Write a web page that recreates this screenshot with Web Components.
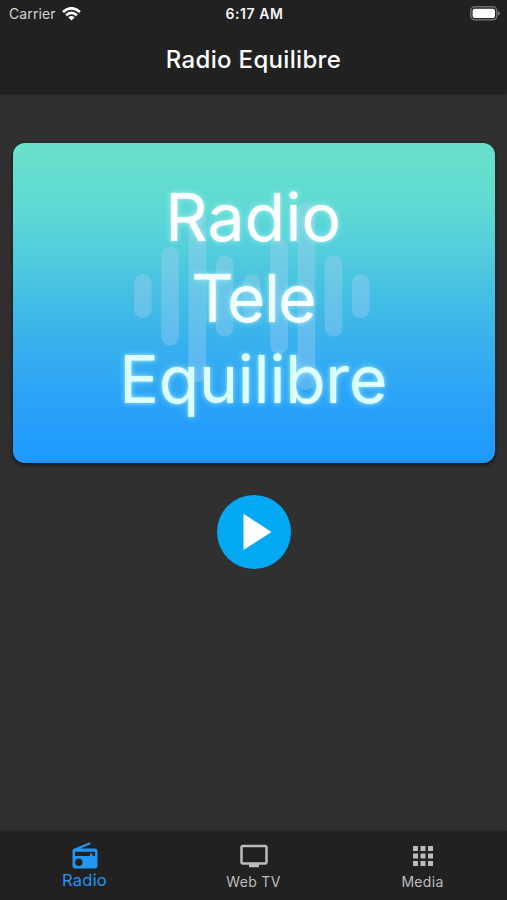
<!DOCTYPE html>
<html lang="en">
<head>
<meta charset="utf-8">
<meta name="viewport" content="width=device-width, initial-scale=1">
<title>Radio Equilibre</title>
<style>
	body {
		margin: 0;
		background: #303030;
		font-family: Inter, "Liberation Sans", sans-serif;
	}
</style>
</head>
<body>
<radio-app>
	<status-bar slot="top" carrier="Carrier" time="6:17 AM"></status-bar>
	<app-bar slot="top">Radio Equilibre</app-bar>
	<cover-card>
		<cover-line style="--spacing: 0.2px">Radio</cover-line>
		<cover-line style="--spacing: -1.6px">Tele</cover-line>
		<cover-line style="--spacing: -0.2px">Equilibre</cover-line>
	</cover-card>
	<play-button></play-button>
	<tab-bar slot="bottom">
		<tab-item icon="radio" active>Radio</tab-item>
		<tab-item icon="tv">Web TV</tab-item>
		<tab-item icon="apps">Media</tab-item>
	</tab-bar>
</radio-app>

<script>
class BaseElement extends HTMLElement {
	constructor() {
		super();
		this.attachShadow({ mode: "open" });
	}
	connectedCallback() {
		this.shadowRoot.innerHTML = this.render();
	}
}

class RadioApp extends BaseElement {
	render() {
		return `
<style>
	:host {
		display: flex;
		flex-direction: column;
		height: 900px;
		overflow: hidden;
		background: #303030;
	}
	header {
		background: #212121;
		height: 94px;
		box-shadow: 0 1px 3px #0003;
	}
	main {
		flex: 1;
		display: flex;
		flex-direction: column;
		align-items: center;
		gap: 32px;
		padding: 49px 12.5px 0 13px;
	}
</style>
<header><slot name="top"></slot></header>
<main><slot></slot></main>
<slot name="bottom"></slot>`;
	}
}

class StatusBar extends BaseElement {
	render() {
		return `
<style>
	:host {
		display: grid;
		grid-template-columns: 1fr auto 1fr;
		align-items: center;
		height: 27px;
		padding: 0 7px 0 9px;
		color: #f4f4f4;
		font-size: 14px;
	}
	.carrier {
		display: flex;
		align-items: center;
		gap: 6px;
		color: #d4d4d4;
		letter-spacing: 0.1px;
	}
	.time { font-weight: 600; font-size: 14px; letter-spacing: 0.55px; }
	.battery { justify-self: end; }
	svg { display: block; }
</style>
<span class="carrier"><span>${this.getAttribute("carrier")}</span>
	<svg width="19" height="14" viewBox="0 0 19 14" fill="none" stroke="#fff" stroke-width="2.7">
		<path d="M1 5Q9.500-2.400 18 5M4.100 8.300Q9.500 3.500 14.900 8.300"/>
		<path d="M6.300 10.300Q9.500 7.700 12.700 10.300L9.500 13.500Z" fill="#fff" stroke="none"/>
	</svg>
</span>
<span class="time">${this.getAttribute("time")}</span>
<svg class="battery" width="30" height="15" viewBox="0 0 30 15">
	<rect x=".8" y=".8" width="26" height="13" rx="4" fill="none" stroke="#6e6e6e" stroke-width="1.500"/>
	<rect x="2.600" y="2.700" width="22.400" height="9.200" rx="2" fill="#fff"/>
	<path d="M28 5.200Q30 6 30 7.300T28 9.400Z" fill="#777"/>
</svg>`;
	}
}

class AppBar extends BaseElement {
	render() {
		return `
<style>
	:host {
		display: flex;
		align-items: center;
		justify-content: center;
		height: 65px;
		color: #fff;
		font-size: 24px;
		font-weight: 500;
		letter-spacing: 0.32px;
	}
</style>
<slot></slot>`;
	}
}

class CoverCard extends BaseElement {
	// bar heights of the equalizer, left to right
	static BARS = [44, 99, 172, 81, 44, 116, 188, 81, 44];

	render() {
		const bars = CoverCard.BARS.map((h, i) =>
			`<rect x="${i * 27.25}" y="${94 - h / 2}" width="17.7" height="${h}" rx="8.85"/>`).join("");
		return `
<style>
	:host {
		display: grid;
		place-items: center;
		align-self: stretch;
		height: 320px;
		border-radius: 12px;
		background: linear-gradient(#69e1cc, #60dad3 19%, #52cddc 34%, #43bde4 49%, #37afee 64%, #2aa3f8 80%, #1f99ff);
		box-shadow: 0 2px 4px #0009;
	}
	svg, .text { grid-area: 1 / 1; }
	svg { margin: 0 4px 14px 0; }
	.text { padding: 0 1px 10px 0; text-align: center; }
</style>
<svg width="236" height="188" viewBox="0 0 236 188" fill="#b4d4f4" fill-opacity=".32">${bars}</svg>
<div class="text"><slot></slot></div>`;
	}
}

class CoverLine extends BaseElement {
	render() {
		return `
<style>
	:host {
		display: block;
		font-size: 66px;
		line-height: 81px;
		letter-spacing: var(--spacing, 0);
	}
	span {
		color: var(--fill, #fff);
		text-shadow: 0 0 2px #c8ffff90, 0 0 6px #c8ffffa0;
	}
	:host(:nth-of-type(2)) { --fill: #f4ffff; }
	:host(:nth-of-type(3)) { --fill: #dcffff; }
</style>
<span><slot></slot></span>`;
	}
}

class PlayButton extends BaseElement {
	render() {
		return `
<style>
	:host { display: block; }
	button {
		display: block;
		width: 74px;
		height: 74px;
		padding: 0;
		border: none;
		border-radius: 50%;
		background: #03a9f4;
	}
	svg { display: block; }
</style>
<button aria-label="Play">
	<svg width="74" height="74" viewBox="0 0 74 74"><path d="M26.500 18.800V55L54.500 36.900Z" fill="#fff"/></svg>
</button>`;
	}
}

class TabBar extends BaseElement {
	render() {
		return `
<style>
	:host {
		display: grid;
		grid-template-columns: repeat(3, 1fr);
		height: 69px;
		background: #212121;
		box-shadow: 0 -1px 3px #0003;
	}
</style>
<slot></slot>`;
	}
}

class TabItem extends BaseElement {
	static ICONS = {
		radio: "M3.240 6.150C2.510 6.430 2 7.170 2 8v12c0 1.100.890 2 2 2h16c1.110 0 2-.900 2-2V8c0-1.110-.890-2-2-2H8.300l8.260-3.340L15.880 1 3.240 6.150zM7 20c-1.660 0-3-1.340-3-3s1.340-3 3-3 3 1.340 3 3-1.340 3-3 3zm13-8h-2v-2h-2v2H4V8.500h16v3.500z",
		tv: "M21 3H3c-1.100 0-2 .900-2 2v12c0 1.100.900 2 2 2h5v2h8v-2h5c1.100 0 1.990-.900 1.990-2L23 5c0-1.100-.900-2-2-2zm0 14H3V5h18v12z",
		apps: "M4 8h4V4H4v4zm6 12h4v-4h-4v4zm-6 0h4v-4H4v4zm0-6h4v-4H4v4zm6 0h4v-4h-4v4zm6-10v4h4V4h-4zm-6 4h4V4h-4v4zm6 6h4v-4h-4v4zm0 6h4v-4h-4v4z",
	};

	render() {
		return `
<style>
	:host {
		display: flex;
		flex-direction: column;
		align-items: center;
		padding-top: 10px;
		color: #bcbcbc;
		font-size: 14px;
		line-height: 20px;
		letter-spacing: 0.3px;
	}
	:host([active]) {
		color: #2196f3;
		font-size: 16.5px;
		letter-spacing: 0.25px;
	}
	svg { display: block; width: 30px; height: 30px; fill: currentColor; }
	span { padding-top: 1px; }
	:host([active]) span { padding-top: 0; margin-top: -1px; }
</style>
<svg viewBox="0 0 24 24"><path d="${TabItem.ICONS[this.getAttribute("icon")]}"/></svg>
<span><slot></slot></span>`;
	}
}

customElements.define("radio-app", RadioApp);
customElements.define("status-bar", StatusBar);
customElements.define("app-bar", AppBar);
customElements.define("cover-card", CoverCard);
customElements.define("cover-line", CoverLine);
customElements.define("play-button", PlayButton);
customElements.define("tab-bar", TabBar);
customElements.define("tab-item", TabItem);
</script>
</body>
</html>
